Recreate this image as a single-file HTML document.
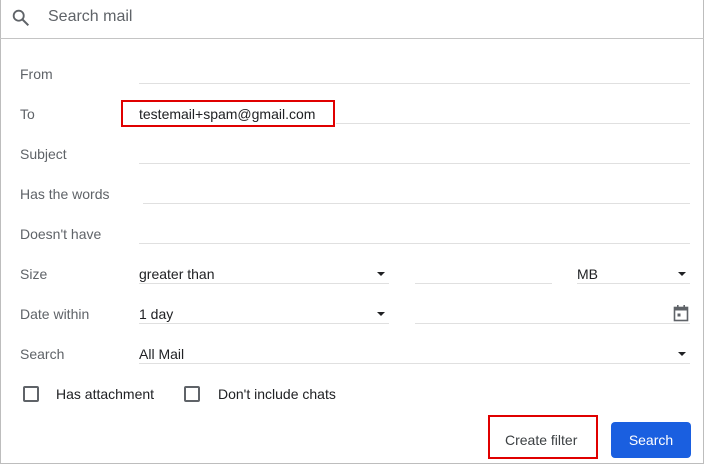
<!DOCTYPE html><html><head><style>
body{margin:0;width:704px;height:465px;position:relative;background:#fff;font-family:"Liberation Sans",Arial,sans-serif;overflow:hidden}
.a{position:absolute}
.l{position:absolute;left:20px;font-size:14px;color:#5f6368;line-height:16px}
.u{position:absolute;height:1px;background:#e0e0e0}
.v{position:absolute;font-size:14px;color:#202124;line-height:16px}
.tri{position:absolute;width:0;height:0;border-left:4px solid transparent;border-right:4px solid transparent;border-top:4px solid #202124}
.cb{position:absolute;width:12px;height:12px;border:2px solid #5f6368;border-radius:2px}
</style></head><body>
<div class="a" style="left:0;top:0;width:702px;height:463px;border:1px solid #bdbdbd;border-top:none"></div>
<div class="a" style="left:0;top:38px;width:704px;height:1px;background:#c4c4c4"></div>
<svg class="a" style="left:10px;top:7px" width="22" height="22" viewBox="0 0 24 24"><circle cx="9.5" cy="9.5" r="5.5" fill="none" stroke="#5f6368" stroke-width="2"/><path d="M13.5 13.5L20 20" stroke="#5f6368" stroke-width="2.2"/></svg>
<div class="a" style="left:48px;top:8px;font-size:16px;color:#5f6368">Search mail</div>

<div class="l" style="top:66px">From</div><div class="u" style="left:139px;top:83px;width:551px"></div>
<div class="l" style="top:106px">To</div><div class="u" style="left:336px;top:123px;width:354px"></div>
<div class="a" style="left:121px;top:100px;width:210px;height:23px;border:2px solid #e00000"></div>
<div class="v" style="left:139px;top:106px">testemail+spam@gmail.com</div>
<div class="l" style="top:146px">Subject</div><div class="u" style="left:139px;top:163px;width:551px"></div>
<div class="l" style="top:186px">Has the words</div><div class="u" style="left:143px;top:203px;width:547px"></div>
<div class="l" style="top:226px">Doesn't have</div><div class="u" style="left:139px;top:243px;width:551px"></div>
<div class="l" style="top:266px">Size</div>
<div class="v" style="left:139px;top:266px">greater than</div><div class="tri" style="left:377px;top:272px"></div>
<div class="u" style="left:139px;top:283px;width:250px"></div>
<div class="u" style="left:415px;top:283px;width:137px"></div>
<div class="v" style="left:577px;top:266px">MB</div><div class="tri" style="left:678px;top:272px"></div>
<div class="u" style="left:577px;top:283px;width:113px"></div>
<div class="l" style="top:306px">Date within</div>
<div class="v" style="left:139px;top:306px">1 day</div><div class="tri" style="left:377px;top:312px"></div>
<div class="u" style="left:139px;top:323px;width:250px"></div>
<div class="u" style="left:415px;top:323px;width:275px"></div>
<svg class="a" style="left:672px;top:304px" width="18" height="18" viewBox="0 0 18 18"><rect x="2.5" y="3.5" width="13" height="13" fill="none" stroke="#5f6368" stroke-width="1.6"/><rect x="2.5" y="3.5" width="13" height="3" fill="#5f6368"/><rect x="5" y="1" width="1.6" height="3" fill="#5f6368"/><rect x="11.4" y="1" width="1.6" height="3" fill="#5f6368"/><rect x="5.5" y="9.5" width="3" height="3" fill="#5f6368"/></svg>
<div class="l" style="top:346px">Search</div>
<div class="v" style="left:139px;top:346px">All Mail</div><div class="tri" style="left:678px;top:352px"></div>
<div class="u" style="left:139px;top:363px;width:551px"></div>
<div class="cb" style="left:23px;top:386px"></div><div class="v" style="left:56px;top:386px">Has attachment</div>
<div class="cb" style="left:184px;top:386px"></div><div class="v" style="left:218px;top:386px">Don't include chats</div>
<div class="a" style="left:488px;top:415px;width:106px;height:40px;border:2px solid #e00000"></div>
<div class="a" style="left:505px;top:432px;font-size:14px;color:#3c4043">Create filter</div>
<div class="a" style="left:611px;top:422px;width:80px;height:36px;background:#1a5fe0;border-radius:4px;color:#fff;font-size:14px;line-height:36px;text-align:center">Search</div>
</body></html>
